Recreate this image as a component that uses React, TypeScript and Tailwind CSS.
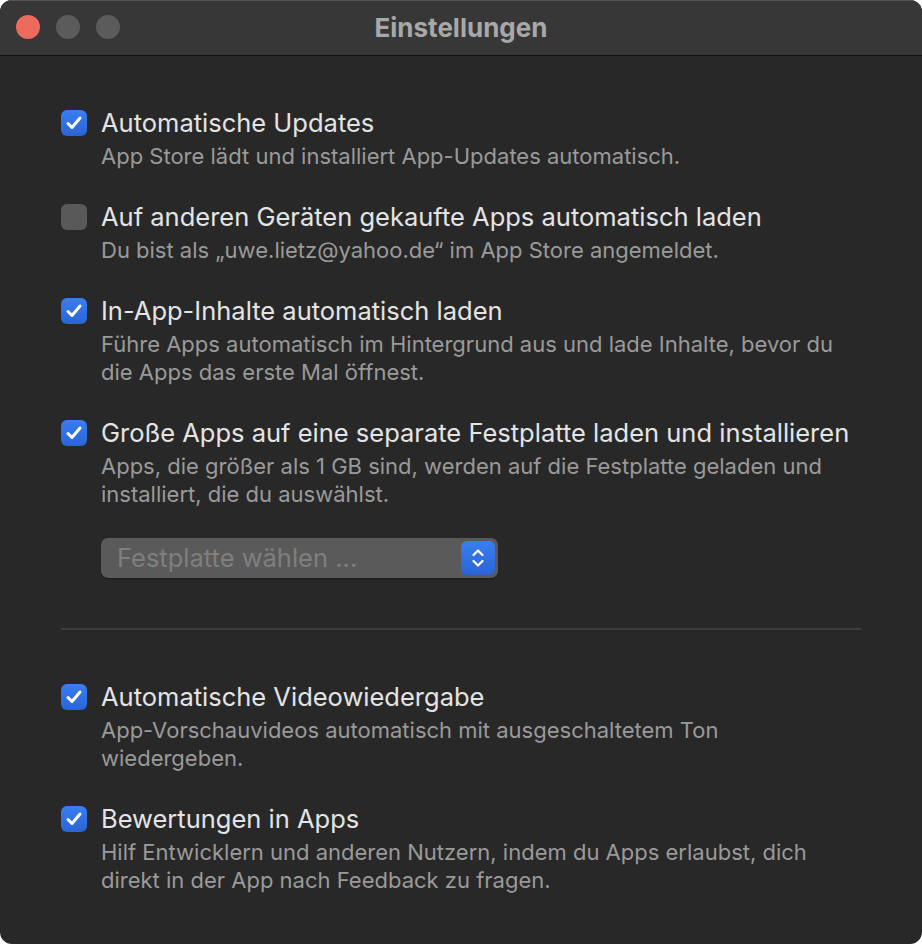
import React from "react";

type Item = {
  title: string;
  lines: string[];
  checked: boolean;
};

const topItems: Item[] = [
  {
    title: "Automatische Updates",
    lines: ["App Store lädt und installiert App-Updates automatisch."],
    checked: true,
  },
  {
    title: "Auf anderen Geräten gekaufte Apps automatisch laden",
    lines: ["Du bist als „uwe.lietz@yahoo.de“ im App Store angemeldet."],
    checked: false,
  },
  {
    title: "In-App-Inhalte automatisch laden",
    lines: [
      "Führe Apps automatisch im Hintergrund aus und lade Inhalte, bevor du",
      "die Apps das erste Mal öffnest.",
    ],
    checked: true,
  },
  {
    title: "Große Apps auf eine separate Festplatte laden und installieren",
    lines: [
      "Apps, die größer als 1 GB sind, werden auf die Festplatte geladen und",
      "installiert, die du auswählst.",
    ],
    checked: true,
  },
];

const bottomItems: Item[] = [
  {
    title: "Automatische Videowiedergabe",
    lines: ["App-Vorschauvideos automatisch mit ausgeschaltetem Ton", "wiedergeben."],
    checked: true,
  },
  {
    title: "Bewertungen in Apps",
    lines: [
      "Hilf Entwicklern und anderen Nutzern, indem du Apps erlaubst, dich",
      "direkt in der App nach Feedback zu fragen.",
    ],
    checked: true,
  },
];

function Checkbox({ checked }: { checked: boolean }) {
  if (!checked) {
    return <div className="h-[26px] w-[26px] shrink-0 rounded-[6px] bg-[#595959]" />;
  }
  return (
    <div className="flex h-[26px] w-[26px] shrink-0 items-center justify-center rounded-[6px] bg-gradient-to-b from-[#3a7ef0] to-[#2a64d6]">
      <svg width="20" height="20" viewBox="0 0 20 20" fill="none">
        <path
          d="M4 10.5 L8 14.5 L16 5"
          stroke="white"
          strokeWidth="3"
          strokeLinecap="round"
          strokeLinejoin="round"
        />
      </svg>
    </div>
  );
}

function Option({ item, children }: { item: Item; children?: React.ReactNode }) {
  return (
    <div className="flex gap-[14px]">
      <div className="pt-[4px]">
        <Checkbox checked={item.checked} />
      </div>
      <div className="flex flex-col">
        <div className="whitespace-nowrap text-[25.5px] leading-[34px] text-[#e4e4e4]">
          {item.title}
        </div>
        <div className="mt-[2px] whitespace-nowrap text-[22px] leading-[28px] text-[#9a9a9a]">
          {item.lines.map((l) => (
            <div key={l}>{l}</div>
          ))}
        </div>
        {children}
      </div>
    </div>
  );
}

export default function App() {
  return (
    <div
      className="h-[944px] w-[922px] bg-white"
      style={{ fontFamily: "Inter, 'Noto Sans', sans-serif" }}
    >
      <div className="flex h-full w-full flex-col overflow-hidden rounded-[12px] bg-[#282828]">
        <div className="relative flex h-[56px] shrink-0 items-center justify-center border-b border-[#111] bg-[#373737] shadow-[inset_0_1px_0_#555]">
          <div className="absolute left-[16px] top-[15px] flex gap-[16px]">
            <div className="h-[24px] w-[24px] rounded-full bg-[#ec6a5e]" />
            <div className="h-[24px] w-[24px] rounded-full bg-[#5b5b5b]" />
            <div className="h-[24px] w-[24px] rounded-full bg-[#5b5b5b]" />
          </div>
          <div className="text-[26px] font-bold text-[#a8a8a8]">Einstellungen</div>
        </div>

        <div className="flex flex-col px-[61px] pt-[50px]">
          <div className="flex flex-col gap-[30px]">
            {topItems.map((item, i) => (
              <Option key={item.title} item={item}>
                {i === 3 && (
                  <div className="mt-[30px] flex h-[40px] w-[397px] items-center justify-between rounded-[7px] bg-[#5a5a5a] pl-[16px] pr-[3px] shadow-[0_1px_1px_rgba(0,0,0,0.3)]">
                    <span className="text-[25.5px] text-[#7f7f7f]">Festplatte wählen ...</span>
                    <div className="flex h-[34px] w-[34px] items-center justify-center rounded-[6px] bg-gradient-to-b from-[#3a7ef0] to-[#2a64d6]">
                      <svg width="16" height="24" viewBox="0 0 16 24" fill="none">
                        <path
                          d="M3.5 9 L8 4.5 L12.5 9 M3.5 15 L8 19.5 L12.5 15"
                          stroke="white"
                          strokeWidth="2.2"
                          strokeLinecap="round"
                          strokeLinejoin="round"
                        />
                      </svg>
                    </div>
                  </div>
                )}
              </Option>
            ))}
          </div>

          <div className="mt-[50px] h-[2px] w-full bg-[#3d3d3d]" />

          <div className="mt-[50px] flex flex-col gap-[30px]">
            {bottomItems.map((item) => (
              <Option key={item.title} item={item} />
            ))}
          </div>
        </div>
      </div>
    </div>
  );
}
